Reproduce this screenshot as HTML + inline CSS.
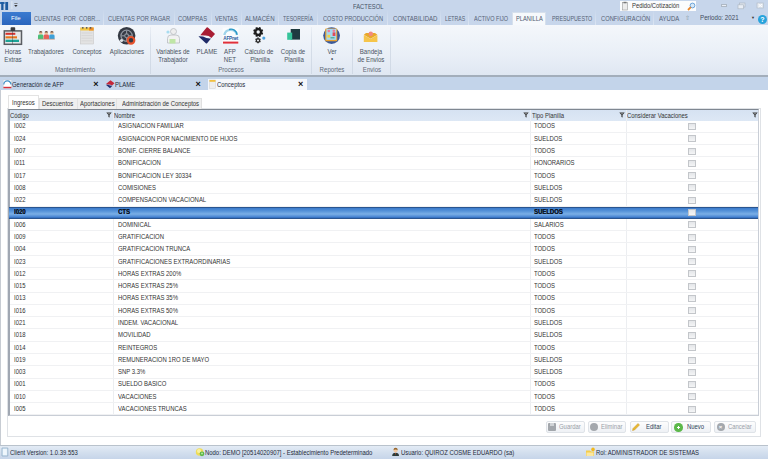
<!DOCTYPE html><html><head><meta charset="utf-8"><style>*{box-sizing:border-box;margin:0;padding:0}
html,body{width:768px;height:459px;overflow:hidden;background:#fff}
body{position:relative;font-family:"Liberation Sans",sans-serif;font-size:6px;color:#333;line-height:1}
.a{position:absolute;white-space:nowrap}
#title{left:0;top:0;width:768px;height:25px;background:#c7d6eb}
.tab{position:absolute;font-size:6px;color:#556275;white-space:nowrap}
.sep{position:absolute;top:9px;width:1px;height:16px;background:linear-gradient(rgba(255,255,255,0),rgba(255,255,255,0.35))}
#ribbon{left:0;top:25px;width:768px;height:50px;background:linear-gradient(#f4f7fb,#e9eff7 60%,#dfe7f2)}
.rl{position:absolute;font-size:6px;color:#4b5462;text-align:center;white-space:nowrap}
.rsep{position:absolute;top:27px;width:1px;height:47px;background:linear-gradient(rgba(200,210,224,0.2),#d5dde8 40%,#d0d9e5)}
#doctabs{left:0;top:75px;width:768px;height:14.5px;background:#c3d4ea;border-top:2px solid #a3aebb}
.dt{position:absolute;font-size:6px;color:#1e2a3a;white-space:nowrap}
#content{left:0;top:89.5px;width:768px;height:355px;background:#fff;border-left:1px solid #c7ccd3}
#panel{left:7px;top:108px;width:754px;height:329px;border:1px solid #dfe2e6;background:#fff}
.it{position:absolute;font-size:6px;color:#333;white-space:nowrap}
#grid{left:8px;top:109px;width:751px;height:307px;border:1px solid #c9ced6;border-left:2px solid #a0a7b2;border-top:1px solid #7f8791;background:#fff}
#ghead{left:10px;top:110px;width:748px;height:10.5px;background:linear-gradient(#d6e2f2,#dde8f5)}
.sel{left:9px;width:749px;height:12.3px;background:linear-gradient(#3b7bcc,#5592d8 30%,#7aafe6 60%,#4f8bd5 85%,#2e69bb);border-top:1px solid #2a5590;border-bottom:1px solid #2a5590}
.rline{left:10px;width:748px;height:1px;background:#f0f1f3}
.c{position:absolute;font-size:6px;color:#333;white-space:nowrap}
.chk{width:7.2px;height:7px;border:1px solid #c3c6ca;background:linear-gradient(#e4e6e9,#f4f5f6)}
.vl{position:absolute;top:110px;width:1px;height:305px;background:#eceef1}
.btn{position:absolute;top:420.5px;height:12.5px;border:1px solid #dfe3e8;border-radius:2px;background:linear-gradient(#fdfdfd,#eef1f5)}
#status{left:0;top:444.5px;width:768px;height:14.5px;background:linear-gradient(#e3ebf5,#d3dfee 50%,#c6d5e9);border-top:1px solid #b9c2cc}
.st{position:absolute;font-size:6px;color:#1e2a3a;white-space:nowrap}
.c,.st,.it,.dt{font-size:6.9px;transform:scaleX(0.86);transform-origin:0 0}
.tab{font-size:7.2px;transform:scaleX(0.8);transform-origin:0 0}
.rl{font-size:6.8px;transform:scaleX(0.9);transform-origin:50% 0}
</style></head><body>
<div class="a" id="title"></div>
<svg class="a" style="left:0;top:0" width="20" height="12"><rect x="0" y="2" width="4.6" height="2" fill="#2a6db3"/><rect x="1.2" y="2" width="2.3" height="8" fill="#1d5a9e"/><rect x="5.3" y="2" width="2.8" height="8" fill="#1d5a9e"/><rect x="11.5" y="1" width="0.8" height="8" fill="#e6edf6"/><rect x="14.3" y="3.3" width="3.2" height="0.7" fill="#555"/><path d="M14.2 5 h3.4 l-1.7 2z" fill="#333"/></svg>
<div class="a" style="left:353px;top:2.6px;color:#465466;font-size:7.2px;transform:scaleX(0.81);transform-origin:0 0">FACTESOL</div>
<div class="a" style="left:620px;top:1px;width:76px;height:9.5px;background:#fbfcfd"></div>
<svg class="a" style="left:621px;top:1px" width="9" height="10"><rect x="1.5" y="1.5" width="5" height="7.5" fill="#ececec" stroke="#9a9a9a" stroke-width="0.6"/><rect x="2.5" y="0.8" width="3" height="1.5" fill="#777"/></svg>
<div class="a" style="left:631.5px;top:3px;color:#333;font-size:6.9px;transform:scaleX(0.85);transform-origin:0 0">Pedido/Cotización</div>
<svg class="a" style="left:687px;top:1.5px" width="9" height="9"><circle cx="5.5" cy="3.5" r="2.4" fill="#d6e8f7" stroke="#5d9bd6" stroke-width="0.9"/><line x1="1" y1="8" x2="3.8" y2="5.2" stroke="#e8862a" stroke-width="1.8"/></svg>
<div class="a" style="left:721px;top:4.3px;width:6.3px;height:2.4px;background:#e9eef5;border:0.6px solid #aeb8c4"></div>
<svg class="a" style="left:737px;top:2px" width="10" height="8"><rect x="2.5" y="1" width="5.5" height="4" fill="#e2e8f0" stroke="#aeb8c4" stroke-width="0.7"/><rect x="1" y="2.8" width="5.5" height="4" fill="#e9eef5" stroke="#aeb8c4" stroke-width="0.7"/></svg>
<svg class="a" style="left:756px;top:2px" width="9" height="8"><rect x="1" y="1" width="6.5" height="5" fill="#e2e8f0" stroke="#b6bfca" stroke-width="0.7"/><path d="M2.5 2 L6 5 M6 2 L2.5 5" stroke="#ffffff" stroke-width="1"/></svg>
<div class="a" style="left:2px;top:12px;width:29px;height:13px;background:linear-gradient(#3b7bd0,#2a65bd);"></div>
<div class="a" style="left:11px;top:15px;color:#fff;font-size:6px">File</div>
<div class="tab" style="left:34px;top:14.6px;transform:scaleX(0.785)">CUENTAS&nbsp; POR&nbsp; COBR...</div>
<div class="tab" style="left:108px;top:14.6px;transform:scaleX(0.795)">CUENTAS POR PAGAR</div>
<div class="tab" style="left:178px;top:14.6px;transform:scaleX(0.797)">COMPRAS</div>
<div class="tab" style="left:215px;top:14.6px;transform:scaleX(0.796)">VENTAS</div>
<div class="tab" style="left:245px;top:14.6px;transform:scaleX(0.852)">ALMACÉN</div>
<div class="tab" style="left:283px;top:14.6px;transform:scaleX(0.723)">TESORERÍA</div>
<div class="tab" style="left:323px;top:14.6px;transform:scaleX(0.784)">COSTO PRODUCCIÓN</div>
<div class="tab" style="left:392.5px;top:14.6px;transform:scaleX(0.846)">CONTABILIDAD</div>
<div class="tab" style="left:444.8px;top:14.6px;transform:scaleX(0.721)">LETRAS</div>
<div class="tab" style="left:474px;top:14.6px;transform:scaleX(0.766)">ACTIVO FIJO</div>
<div class="tab" style="left:551.5px;top:14.6px;transform:scaleX(0.743)">PRESUPUESTO</div>
<div class="tab" style="left:600.5px;top:14.6px;transform:scaleX(0.803)">CONFIGURACIÓN</div>
<div class="tab" style="left:658.7px;top:14.6px;transform:scaleX(0.837)">AYUDA</div>
<div class="sep" style="left:103px"></div>
<div class="sep" style="left:174px"></div>
<div class="sep" style="left:211px"></div>
<div class="sep" style="left:241px"></div>
<div class="sep" style="left:278px"></div>
<div class="sep" style="left:317px"></div>
<div class="sep" style="left:387px"></div>
<div class="sep" style="left:440px"></div>
<div class="sep" style="left:468px"></div>
<div class="sep" style="left:595px"></div>
<div class="sep" style="left:653px"></div>
<div class="a" style="left:512px;top:12px;width:34px;height:14px;background:#f6f9fc;border:1px solid #d6e0ec;border-bottom:none"></div>
<div class="tab" style="left:515.5px;top:14.6px;color:#4d5b6e">PLANILLA</div>
<div class="a" style="left:685px;top:15px;color:#8a96a6;font-size:6px">&#8679;</div>
<div class="a" style="left:700px;top:15px;color:#3f4c5e;font-size:6.6px;transform:scaleX(0.94);transform-origin:0 0">Periodo: 2021</div>
<div class="a" style="left:751px;top:15px;color:#333;font-size:4px;top:16px">&#9660;</div>
<div class="a" style="left:758px;top:15px;width:9px;height:9px;border-radius:50%;background:#27a3dc;color:#fff;font:bold 7px/9px 'Liberation Sans';text-align:center">?</div>
<div class="a" id="ribbon"></div>
<svg class="a" style="left:0;top:25px" width="400" height="22" viewBox="0 25 400 22">
<!-- Horas Extras -->
<rect x="4.3" y="30.9" width="17.2" height="13.4" fill="#e6e7e9" stroke="#5a5d62" stroke-width="1.5"/>
<rect x="10.6" y="27.2" width="4.6" height="3.8" rx="0.8" fill="#3a3c40"/>
<rect x="5.5" y="32.8" width="9.8" height="2" fill="#d8302c"/>
<rect x="5.5" y="36.3" width="11.5" height="2.1" fill="#e8741c"/>
<rect x="5.5" y="39.7" width="13.5" height="2.3" fill="#1ca396"/>
<line x1="12.5" y1="31" x2="12.5" y2="44" stroke="#3a3c40" stroke-width="0.6" opacity="0.7"/>
<!-- Trabajadores -->
<g>
<circle cx="40.7" cy="33.2" r="1.6" fill="#eec49c"/><path d="M39 32.6 a1.7 1.7 0 0 1 3.4 0z" fill="#6b4a3a"/>
<path d="M38 39 V36 q0 -1.4 1.4 -1.4 h2.6 q1.4 0 1.4 1.4 V39z" fill="#4cc07a"/>
<circle cx="46.3" cy="33.2" r="1.6" fill="#eec49c"/><path d="M44.6 32.6 a1.7 1.7 0 0 1 3.4 0z" fill="#6b4a3a"/>
<path d="M43.6 39 V36 q0 -1.4 1.4 -1.4 h2.6 q1.4 0 1.4 1.4 V39z" fill="#e8605a"/>
<circle cx="51.9" cy="33.2" r="1.6" fill="#eec49c"/><path d="M50.2 32.6 a1.7 1.7 0 0 1 3.4 0z" fill="#6b4a3a"/>
<path d="M49.2 39 V36 q0 -1.4 1.4 -1.4 h2.6 q1.4 0 1.4 1.4 V39z" fill="#3fa0d8"/>
<rect x="37.8" y="38.8" width="17" height="0.7" fill="#c08a70"/>
</g>
<!-- Conceptos -->
<rect x="80.3" y="28" width="13.3" height="16" fill="#e3e3e3" stroke="#c9c9c9" stroke-width="0.6"/>
<rect x="80.3" y="27.5" width="13.3" height="3" fill="#f5c842"/>
<rect x="89" y="27.5" width="4.6" height="3" fill="#f0902a"/>
<circle cx="82.8" cy="27.8" r="0.9" fill="#555"/><circle cx="86.7" cy="27.8" r="0.9" fill="#555"/><circle cx="90.6" cy="27.8" r="0.9" fill="#555"/>
<g stroke="#cfcfcf" stroke-width="0.6"><line x1="81.5" y1="33" x2="92.5" y2="33"/><line x1="81.5" y1="35.6" x2="92.5" y2="35.6"/><line x1="81.5" y1="38.2" x2="92.5" y2="38.2"/><line x1="81.5" y1="40.8" x2="92.5" y2="40.8"/></g>
<!-- Aplicaciones -->
<circle cx="126.6" cy="35.8" r="8.8" fill="#353a44"/>
<circle cx="126.6" cy="35.8" r="5.6" fill="none" stroke="#9197a0" stroke-width="1.3"/>
<circle cx="126.6" cy="35.8" r="1.9" fill="none" stroke="#9197a0" stroke-width="1.1"/>
<g stroke="#9197a0" stroke-width="1.1"><line x1="126.6" y1="30.5" x2="126.6" y2="33.9"/><line x1="121.5" y1="35.8" x2="124.7" y2="35.8"/><line x1="131.7" y1="35.8" x2="128.5" y2="35.8"/><line x1="126.6" y1="37.7" x2="126.6" y2="41"/></g>
<circle cx="131" cy="40.3" r="3.3" fill="#353a44" stroke="#e6522c" stroke-width="2.2"/>
<circle cx="121.5" cy="40.5" r="1.6" fill="#dfe2e6"/>
<!-- Variables de Trabajador -->
<circle cx="173.5" cy="31.5" r="3" fill="#eeeeee" stroke="#b9bcc0" stroke-width="0.8"/>
<path d="M167.5 43 V38.5 q0 -3.5 3.5 -3.5 h5 q3.5 0 3.5 3.5 V43z" fill="#f2f2f2" stroke="#b9bcc0" stroke-width="0.8"/>
<rect x="169.5" y="39" width="6" height="4.5" fill="#bfe6a6"/>
<circle cx="168" cy="32" r="1.6" fill="#a8dcf0"/>
<!-- PLAME -->
<path d="M200.3 35.2 L206.6 27.6 Q207.2 27 207.9 27.6 L214.6 33.4 Q215.2 34 214.6 34.6 L211.4 38 Q208.5 35.3 205 35.6 Z" fill="#a81d33"/>
<path d="M198.6 36.6 Q198.2 36.2 198.8 36.2 L203 36.4 Q207 38.8 211 38.4 L207.1 43.2 Q206.5 43.8 205.8 43.2 Z" fill="#1f2a68"/>
<!-- AFPnet -->
<rect x="222.6" y="27.6" width="16" height="16.2" fill="#fafcfd"/>
<path d="M224.3 35 A6.5 6.5 0 0 1 237 35" fill="none" stroke="#9fd3ea" stroke-width="2.4"/>
<path d="M229 29.5 A6 6 0 0 1 237 34.8" fill="none" stroke="#2b98c6" stroke-width="1.4"/>
<text x="223.3" y="39.8" font-family="Liberation Sans" font-weight="bold" font-size="4.6" fill="#2a5a9c" letter-spacing="-0.2">AFPnet</text>
<rect x="223" y="41.6" width="15.3" height="2" fill="#e0303a"/>
<!-- Calculo -->
<path d="M262.09 32.31 L263.20 32.99 L262.44 34.83 L261.17 34.53 L260.73 34.97 L261.03 36.24 L259.19 37.00 L258.51 35.89 L257.89 35.89 L257.21 37.00 L255.37 36.24 L255.67 34.97 L255.23 34.53 L253.96 34.83 L253.20 32.99 L254.31 32.31 L254.31 31.69 L253.20 31.01 L253.96 29.17 L255.23 29.47 L255.67 29.03 L255.37 27.76 L257.21 27.00 L257.89 28.11 L258.51 28.11 L259.19 27.00 L261.03 27.76 L260.73 29.03 L261.17 29.47 L262.44 29.17 L263.20 31.01 L262.09 31.69Z M259.90 32.00 A1.7 1.7 0 1 0 256.50 32.00 A1.7 1.7 0 1 0 259.90 32.00Z" fill="#1c1c1c" fill-rule="evenodd"/>
<path d="M260.19 40.63 L260.80 41.15 L260.05 42.45 L259.29 42.18 L258.89 42.41 L258.75 43.20 L257.25 43.20 L257.11 42.41 L256.71 42.18 L255.95 42.45 L255.20 41.15 L255.81 40.63 L255.81 40.17 L255.20 39.65 L255.95 38.35 L256.71 38.62 L257.11 38.39 L257.25 37.60 L258.75 37.60 L258.89 38.39 L259.29 38.62 L260.05 38.35 L260.80 39.65 L260.19 40.17Z M259.00 40.40 A1 1 0 1 0 257.00 40.40 A1 1 0 1 0 259.00 40.40Z" fill="#2a2a2a" fill-rule="evenodd"/>
<circle cx="263.8" cy="38.1" r="1.6" fill="#4fa3e0"/>
<!-- Copia de planilla -->
<rect x="290.7" y="29" width="9.3" height="10.6" fill="#1f3b40"/>
<rect x="287.2" y="32.6" width="5" height="7.2" fill="#36c49a"/>
<!-- Ver -->
<circle cx="331.6" cy="35.6" r="8.4" fill="#3b5a9a"/>
<circle cx="331.6" cy="35.6" r="7.3" fill="#e6eef7" opacity="0"/>
<rect x="325.2" y="28.6" width="12" height="12.6" rx="0.8" fill="#e9a231"/>
<rect x="326.4" y="28.9" width="9.8" height="11" fill="#a6d8ef"/>
<circle cx="328.8" cy="31" r="1.3" fill="#f07a9a"/><circle cx="333.8" cy="30.8" r="1.3" fill="#f07a9a"/>
<rect x="332.6" y="32.4" width="2.8" height="3.6" fill="#e04a5a"/>
<rect x="327.4" y="34.8" width="2.8" height="2.8" fill="#f5d040"/>
<rect x="330.5" y="37" width="4" height="1.5" fill="#5ab0a0"/>
<!-- Bandeja -->
<path d="M363.8 35 L370.6 39 L377.4 35 V41.9 H363.8 Z" fill="#f6c54a"/>
<path d="M363.8 34.8 L366 33 L375 33 L377.4 34.8 L370.6 38.8 Z" fill="#e9a82a"/>
<circle cx="370.8" cy="33.8" r="2.2" fill="#f28a80"/>
</svg>

<div class="rl" style="left:-17px;top:49px;width:60px;">Horas</div>
<div class="rl" style="left:-17px;top:57px;width:60px;">Extras</div>
<div class="rl" style="left:16px;top:49px;width:60px;">Trabajadores</div>
<div class="rl" style="left:57px;top:49px;width:60px;">Conceptos</div>
<div class="rl" style="left:97px;top:49px;width:60px;">Aplicaciones</div>
<div class="rl" style="left:142.5px;top:49px;width:60px;">Variables de</div>
<div class="rl" style="left:142.5px;top:57px;width:60px;">Trabajador</div>
<div class="rl" style="left:176.5px;top:49px;width:60px;">PLAME</div>
<div class="rl" style="left:200px;top:49px;width:60px;">AFP</div>
<div class="rl" style="left:200px;top:57px;width:60px;">NET</div>
<div class="rl" style="left:228.5px;top:49px;width:60px;">Cálculo de</div>
<div class="rl" style="left:229.5px;top:57px;width:60px;">Planilla</div>
<div class="rl" style="left:263px;top:49px;width:60px;">Copia de</div>
<div class="rl" style="left:263.5px;top:57px;width:60px;">Planilla</div>
<div class="rl" style="left:301.5px;top:49px;width:60px;">Ver</div>
<div class="rl" style="left:301.5px;top:55.5px;width:60px;">&bull;</div>
<div class="rl" style="left:340.5px;top:49px;width:60px;">Bandeja</div>
<div class="rl" style="left:340.5px;top:57px;width:60px;">de Envios</div>
<div class="rl" style="left:45px;top:67px;width:60px;color:#5f6977;">Mantenimiento</div>
<div class="rl" style="left:200.5px;top:67px;width:60px;color:#5f6977;">Procesos</div>
<div class="rl" style="left:302px;top:67px;width:60px;color:#5f6977;">Reportes</div>
<div class="rl" style="left:341.5px;top:67px;width:60px;color:#5f6977;">Envios</div>
<div class="rsep" style="left:149.5px"></div>
<div class="rsep" style="left:310.5px"></div>
<div class="rsep" style="left:352px"></div>
<div class="rsep" style="left:389.5px"></div>
<div class="a" id="doctabs"></div>
<div class="a" style="left:208px;top:78.5px;width:99px;height:11px;background:#f4f7fb"></div>
<!-- doc tab icons -->
<svg class="a" style="left:0;top:78px" width="230" height="12" viewBox="0 78 230 12">
<rect x="3.2" y="80" width="8.4" height="8.2" fill="#ffffff" stroke="#c8ccd2" stroke-width="0.5"/>
<path d="M3.8 84.5 A3.5 3.5 0 0 1 11 84.5" fill="none" stroke="#3d8fc6" stroke-width="1.2"/>
<rect x="3.4" y="86.8" width="8" height="1.4" fill="#d8303a"/>
<path d="M106 84 L110.5 80.2 L114.5 83.3 L112 85.5 Q110 84 107.5 84.6Z" fill="#c4283a"/>
<path d="M105.8 84.8 L108 84.8 Q110.5 86 112.4 85.8 L110 88.2Z" fill="#213072"/>
<rect x="209.5" y="80" width="6" height="8.5" fill="#eeeeee" stroke="#cfcfcf" stroke-width="0.5"/>
<rect x="209.5" y="80" width="6" height="1.8" fill="#f2c040"/>
</svg>

<div class="dt" style="left:12px;top:82px;">Generación de AFP</div>
<div class="a" style="left:93.3px;top:80px;font:bold 9px/9px 'Liberation Sans';color:#111">&#215;</div>
<div class="dt" style="left:115px;top:82px;">PLAME</div>
<div class="a" style="left:195.5px;top:80px;font:bold 9px/9px 'Liberation Sans';color:#111">&#215;</div>
<div class="dt" style="left:216.5px;top:82px;">Conceptos</div>
<div class="a" style="left:298px;top:80px;font:bold 9px/9px 'Liberation Sans';color:#111">&#215;</div>
<div class="a" id="content"></div>
<div class="a" id="panel"></div>
<div class="a" style="left:39px;top:98px;width:163px;height:11px;background:#efefef;border:1px solid #e0e0e0;border-bottom:none"></div>
<div class="a" style="left:77px;top:99px;width:1px;height:10px;background:#e2e2e2"></div>
<div class="a" style="left:116px;top:99px;width:1px;height:10px;background:#e2e2e2"></div>
<div class="a" style="left:8px;top:95.3px;width:31px;height:14px;background:#fff;border:1px solid #e3e3e3;border-bottom:none"></div>
<div class="it" style="left:12px;top:100px;">Ingresos</div>
<div class="it" style="left:41.5px;top:101px;">Descuentos</div>
<div class="it" style="left:80px;top:101px;">Aportaciones</div>
<div class="it" style="left:122px;top:101px;">Administración de Conceptos</div>
<div class="a" id="grid"></div>
<div class="a" id="ghead"></div>
<div class="c" style="left:10px;top:112.5px;">Código</div>
<div class="c" style="left:113.5px;top:112.5px;">Nombre</div>
<div class="c" style="left:531.5px;top:112.5px;">Tipo Planilla</div>
<div class="c" style="left:627px;top:112.5px;">Considerar Vacaciones</div>
<svg class="a" style="left:106px;top:112px" width="6" height="6"><path d="M0.3 0.5H5.7L3.6 3V5.5L2.4 5V3Z" fill="#3a3a3a"/><path d="M1.8 1.3H4.2L3 2.6Z" fill="#9a9ea4"/></svg>
<svg class="a" style="left:522.5px;top:112px" width="6" height="6"><path d="M0.3 0.5H5.7L3.6 3V5.5L2.4 5V3Z" fill="#3a3a3a"/><path d="M1.8 1.3H4.2L3 2.6Z" fill="#9a9ea4"/></svg>
<svg class="a" style="left:619px;top:112px" width="6" height="6"><path d="M0.3 0.5H5.7L3.6 3V5.5L2.4 5V3Z" fill="#3a3a3a"/><path d="M1.8 1.3H4.2L3 2.6Z" fill="#9a9ea4"/></svg>
<svg class="a" style="left:752px;top:112px" width="6" height="6"><path d="M0.3 0.5H5.7L3.6 3V5.5L2.4 5V3Z" fill="#3a3a3a"/><path d="M1.8 1.3H4.2L3 2.6Z" fill="#9a9ea4"/></svg>
<div class="vl" style="left:112.8px"></div>
<div class="vl" style="left:529.6px"></div>
<div class="vl" style="left:625.6px"></div>
<div class="a rline" style="top:131.79px"></div>
<div class="c" style="left:14px;top:123.40px;">I002</div>
<div class="c" style="left:117.5px;top:123.40px;">ASIGNACION FAMILIAR</div>
<div class="c" style="left:534px;top:123.40px;">TODOS</div>
<div class="a chk" style="left:688.4px;top:123.00px"></div>
<div class="a rline" style="top:144.08px"></div>
<div class="c" style="left:14px;top:135.69px;">I024</div>
<div class="c" style="left:117.5px;top:135.69px;">ASIGNACION POR NACIMIENTO DE HIJOS</div>
<div class="c" style="left:534px;top:135.69px;">SUELDOS</div>
<div class="a chk" style="left:688.4px;top:135.29px"></div>
<div class="a rline" style="top:156.37px"></div>
<div class="c" style="left:14px;top:147.98px;">I007</div>
<div class="c" style="left:117.5px;top:147.98px;">BONIF. CIERRE BALANCE</div>
<div class="c" style="left:534px;top:147.98px;">TODOS</div>
<div class="a chk" style="left:688.4px;top:147.58px"></div>
<div class="a rline" style="top:168.66px"></div>
<div class="c" style="left:14px;top:160.27px;">I011</div>
<div class="c" style="left:117.5px;top:160.27px;">BONIFICACION</div>
<div class="c" style="left:534px;top:160.27px;">HONORARIOS</div>
<div class="a chk" style="left:688.4px;top:159.87px"></div>
<div class="a rline" style="top:180.95px"></div>
<div class="c" style="left:14px;top:172.56px;">I017</div>
<div class="c" style="left:117.5px;top:172.56px;">BONIFICACION LEY 30334</div>
<div class="c" style="left:534px;top:172.56px;">TODOS</div>
<div class="a chk" style="left:688.4px;top:172.16px"></div>
<div class="a rline" style="top:193.24px"></div>
<div class="c" style="left:14px;top:184.85px;">I008</div>
<div class="c" style="left:117.5px;top:184.85px;">COMISIONES</div>
<div class="c" style="left:534px;top:184.85px;">SUELDOS</div>
<div class="a chk" style="left:688.4px;top:184.45px"></div>
<div class="a rline" style="top:205.53px"></div>
<div class="c" style="left:14px;top:197.14px;">I022</div>
<div class="c" style="left:117.5px;top:197.14px;">COMPENSACION VACACIONAL</div>
<div class="c" style="left:534px;top:197.14px;">SUELDOS</div>
<div class="a chk" style="left:688.4px;top:196.74px"></div>
<div class="a sel" style="top:206.53px"></div>
<div class="c" style="left:14px;top:209.43px;font-weight:bold;color:#0e1828;text-shadow:0.35px 0 0 #0e1828">I020</div>
<div class="c" style="left:117.5px;top:209.43px;font-weight:bold;color:#0e1828;text-shadow:0.35px 0 0 #0e1828">CTS</div>
<div class="c" style="left:534px;top:209.43px;font-weight:bold;color:#0e1828;text-shadow:0.35px 0 0 #0e1828">SUELDOS</div>
<div class="a chk" style="left:688.4px;top:209.03px"></div>
<div class="a rline" style="top:230.11px"></div>
<div class="c" style="left:14px;top:221.72px;">I006</div>
<div class="c" style="left:117.5px;top:221.72px;">DOMINICAL</div>
<div class="c" style="left:534px;top:221.72px;">SALARIOS</div>
<div class="a chk" style="left:688.4px;top:221.32px"></div>
<div class="a rline" style="top:242.40px"></div>
<div class="c" style="left:14px;top:234.01px;">I009</div>
<div class="c" style="left:117.5px;top:234.01px;">GRATIFICACION</div>
<div class="c" style="left:534px;top:234.01px;">TODOS</div>
<div class="a chk" style="left:688.4px;top:233.61px"></div>
<div class="a rline" style="top:254.69px"></div>
<div class="c" style="left:14px;top:246.30px;">I004</div>
<div class="c" style="left:117.5px;top:246.30px;">GRATIFICACION TRUNCA</div>
<div class="c" style="left:534px;top:246.30px;">TODOS</div>
<div class="a chk" style="left:688.4px;top:245.90px"></div>
<div class="a rline" style="top:266.98px"></div>
<div class="c" style="left:14px;top:258.59px;">I023</div>
<div class="c" style="left:117.5px;top:258.59px;">GRATIFICACIONES EXTRAORDINARIAS</div>
<div class="c" style="left:534px;top:258.59px;">SUELDOS</div>
<div class="a chk" style="left:688.4px;top:258.19px"></div>
<div class="a rline" style="top:279.27px"></div>
<div class="c" style="left:14px;top:270.88px;">I012</div>
<div class="c" style="left:117.5px;top:270.88px;">HORAS EXTRAS 200%</div>
<div class="c" style="left:534px;top:270.88px;">TODOS</div>
<div class="a chk" style="left:688.4px;top:270.48px"></div>
<div class="a rline" style="top:291.56px"></div>
<div class="c" style="left:14px;top:283.17px;">I015</div>
<div class="c" style="left:117.5px;top:283.17px;">HORAS EXTRAS 25%</div>
<div class="c" style="left:534px;top:283.17px;">TODOS</div>
<div class="a chk" style="left:688.4px;top:282.77px"></div>
<div class="a rline" style="top:303.85px"></div>
<div class="c" style="left:14px;top:295.46px;">I013</div>
<div class="c" style="left:117.5px;top:295.46px;">HORAS EXTRAS 35%</div>
<div class="c" style="left:534px;top:295.46px;">TODOS</div>
<div class="a chk" style="left:688.4px;top:295.06px"></div>
<div class="a rline" style="top:316.14px"></div>
<div class="c" style="left:14px;top:307.75px;">I016</div>
<div class="c" style="left:117.5px;top:307.75px;">HORAS EXTRAS 50%</div>
<div class="c" style="left:534px;top:307.75px;">TODOS</div>
<div class="a chk" style="left:688.4px;top:307.35px"></div>
<div class="a rline" style="top:328.43px"></div>
<div class="c" style="left:14px;top:320.04px;">I021</div>
<div class="c" style="left:117.5px;top:320.04px;">INDEM. VACACIONAL</div>
<div class="c" style="left:534px;top:320.04px;">SUELDOS</div>
<div class="a chk" style="left:688.4px;top:319.64px"></div>
<div class="a rline" style="top:340.72px"></div>
<div class="c" style="left:14px;top:332.33px;">I018</div>
<div class="c" style="left:117.5px;top:332.33px;">MOVILIDAD</div>
<div class="c" style="left:534px;top:332.33px;">SUELDOS</div>
<div class="a chk" style="left:688.4px;top:331.93px"></div>
<div class="a rline" style="top:353.01px"></div>
<div class="c" style="left:14px;top:344.62px;">I014</div>
<div class="c" style="left:117.5px;top:344.62px;">REINTEGROS</div>
<div class="c" style="left:534px;top:344.62px;">TODOS</div>
<div class="a chk" style="left:688.4px;top:344.22px"></div>
<div class="a rline" style="top:365.30px"></div>
<div class="c" style="left:14px;top:356.91px;">I019</div>
<div class="c" style="left:117.5px;top:356.91px;">REMUNERACION 1RO DE MAYO</div>
<div class="c" style="left:534px;top:356.91px;">SUELDOS</div>
<div class="a chk" style="left:688.4px;top:356.51px"></div>
<div class="a rline" style="top:377.59px"></div>
<div class="c" style="left:14px;top:369.20px;">I003</div>
<div class="c" style="left:117.5px;top:369.20px;">SNP 3.3%</div>
<div class="c" style="left:534px;top:369.20px;">SUELDOS</div>
<div class="a chk" style="left:688.4px;top:368.80px"></div>
<div class="a rline" style="top:389.88px"></div>
<div class="c" style="left:14px;top:381.49px;">I001</div>
<div class="c" style="left:117.5px;top:381.49px;">SUELDO BASICO</div>
<div class="c" style="left:534px;top:381.49px;">TODOS</div>
<div class="a chk" style="left:688.4px;top:381.09px"></div>
<div class="a rline" style="top:402.17px"></div>
<div class="c" style="left:14px;top:393.78px;">I010</div>
<div class="c" style="left:117.5px;top:393.78px;">VACACIONES</div>
<div class="c" style="left:534px;top:393.78px;">TODOS</div>
<div class="a chk" style="left:688.4px;top:393.38px"></div>
<div class="a rline" style="top:414.46px"></div>
<div class="c" style="left:14px;top:406.07px;">I005</div>
<div class="c" style="left:117.5px;top:406.07px;">VACACIONES TRUNCAS</div>
<div class="c" style="left:534px;top:406.07px;">TODOS</div>
<div class="a chk" style="left:688.4px;top:405.67px"></div>
<div class="btn" style="left:545.5px;width:39.0px"></div>
<div class="a" style="left:548px;top:423px;width:8px;height:8px;background:#a3a7ac;border-radius:1px"></div><div class="a" style="left:550px;top:423px;width:4px;height:3px;background:#d0d3d6"></div>
<div class="c" style="left:558.5px;top:424px;color:#9aa0a8">Guardar</div>
<div class="btn" style="left:587.5px;width:38.5px"></div>
<div class="a" style="left:590px;top:423px;width:8px;height:8px;border-radius:50%;background:#a4a8ad"></div>
<div class="c" style="left:601px;top:424px;color:#9aa0a8">Eliminar</div>
<div class="btn" style="left:629.5px;width:39.0px"></div>
<svg class="a" style="left:631px;top:422px" width="10" height="10"><path d="M1.5 8.5 L2 6.5 L7 1.5 L8.5 3 L3.5 8 Z" fill="#e8b830" stroke="#c9962a" stroke-width="0.5"/></svg>
<div class="c" style="left:646px;top:424px;color:#2c3e56">Editar</div>
<div class="btn" style="left:671px;width:39.5px"></div>
<div class="a" style="left:674px;top:423px;width:8.5px;height:8.5px;border-radius:50%;background:#5cb84a"></div><div class="a" style="left:676.5px;top:426.5px;width:3.5px;height:1.3px;background:#fff"></div><div class="a" style="left:677.5px;top:425.5px;width:1.3px;height:3.5px;background:#fff"></div>
<div class="c" style="left:686.5px;top:424px;color:#2c3e56">Nuevo</div>
<div class="btn" style="left:714px;width:42px"></div>
<div class="a" style="left:716.5px;top:423px;width:8px;height:8px;border-radius:50%;background:#a4a8ad;color:#fff;font:bold 6px/8px 'Liberation Sans';text-align:center">&#215;</div>
<div class="c" style="left:727.5px;top:424px;color:#9aa0a8">Cancelar</div>
<div class="a" id="status"></div>
<svg class="a" style="left:0;top:446px" width="10" height="12"><path d="M2 2 H7.8 V10 H2 Z" fill="#d9ebf8" stroke="#8aa6c2" stroke-width="0.7"/><path d="M3 3 H6.8 V9 H3Z" fill="#eef6fc"/></svg>
<div class="st" style="left:10px;top:450.2px;">Client Version: 1.0.39.553</div>
<svg class="a" style="left:195px;top:446px" width="12" height="12"><circle cx="4.6" cy="6" r="3.8" fill="#eedc58"/><circle cx="4" cy="5" r="2" fill="#f8f0a0"/><circle cx="7" cy="7.8" r="2.4" fill="#5cb84a"/><circle cx="7" cy="7.6" r="1" fill="#b8e6a0"/></svg>
<div class="st" style="left:204.5px;top:450.2px;">Nodo: DEMO [20514020907] - Establecimiento Predeterminado</div>
<svg class="a" style="left:391px;top:446px" width="10" height="12"><path d="M1.2 10 Q1.2 6.8 4.6 6.8 Q8 6.8 8 10Z" fill="#2b3a3a"/><circle cx="4.6" cy="4.6" r="2" fill="#f0c8a0"/><path d="M2.4 4.2 Q2.6 1.8 4.6 1.8 Q6.6 1.8 6.8 4.2 Q4.6 3 2.4 4.2Z" fill="#96652c"/><path d="M4.2 7 L5 7 L4.8 9.5Z" fill="#c8582a"/></svg>
<div class="st" style="left:401px;top:450.2px;">Usuario: QUIROZ COSME EDUARDO (sa)</div>
<svg class="a" style="left:585px;top:446px" width="11" height="12"><path d="M1 4.5 H5 L6 5.5 H9 V10 H1Z" fill="#f5cd4a"/><path d="M1.5 6.5 H8.5 V10 H1.5Z" fill="#fbe7a0"/><circle cx="8" cy="3.4" r="1.8" fill="#f2b81e"/></svg>
<div class="st" style="left:595.5px;top:450.2px;">Rol: ADMINISTRADOR DE SISTEMAS</div>
</body></html>
